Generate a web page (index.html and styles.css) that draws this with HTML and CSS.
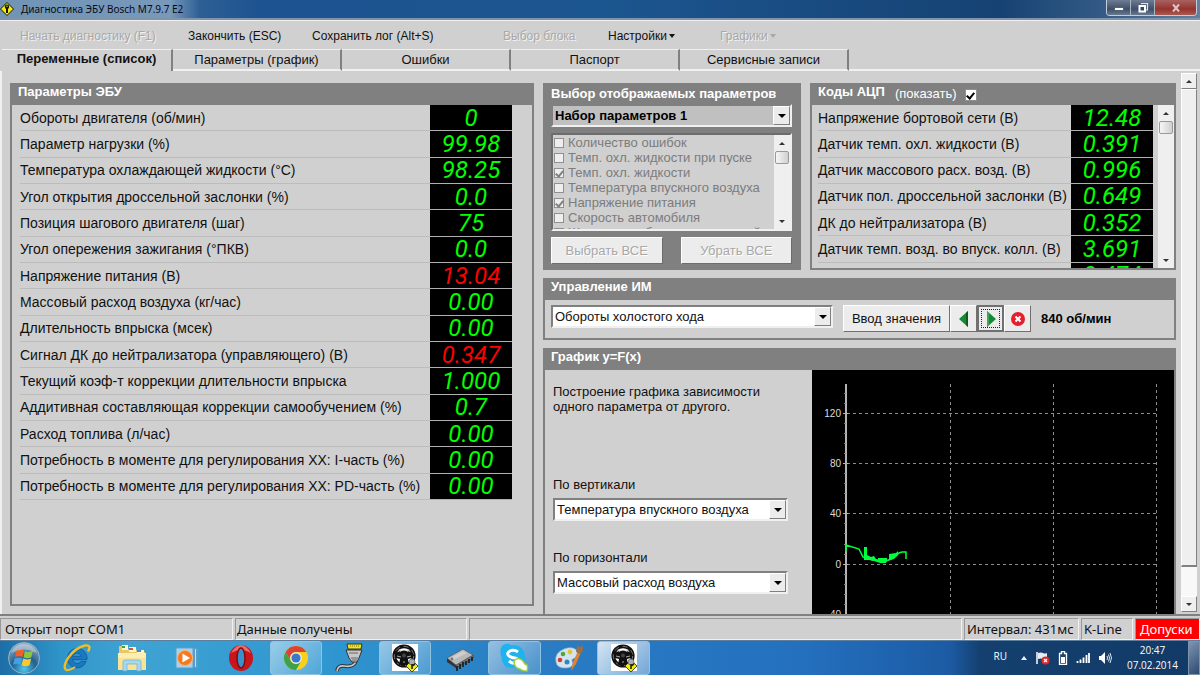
FILE: index.html
```html
<!DOCTYPE html>
<html lang="ru">
<head>
    <meta charset="UTF-8">
    <title>Диагностика ЭБУ Bosch M7.9.7 E2</title>
    <link rel="stylesheet" href="styles.css">
</head>
<body>
    <svg class="defs" aria-hidden="true">
        <symbol id="sign" viewBox="0 0 14 14">
            <path d="M7 0.5L13.5 7L7 13.5L0.5 7Z" fill="#f5ee00" stroke="#111" stroke-width="1"/>
            <circle cx="7" cy="4.8" r="2.2" fill="#111"/>
            <path d="M6 6h2v5h-2z" fill="#111"/>
            <circle cx="7" cy="4.3" r="0.7" fill="#f5ee00"/>
        </symbol>
        <symbol id="wheel" viewBox="0 0 28 28">
            <path d="M1 0h26v27H1z" fill="#fff"/>
            <circle cx="13" cy="12" r="9.7" fill="none" stroke="#111" stroke-width="3.8"/>
            <circle cx="13" cy="12" r="9.7" fill="none" stroke="#777" stroke-width="1" stroke-dasharray="5 4"/>
            <path d="M4 9Q13 4 22 9L21 14L17 15L18 21H8L9 15L5 14Z" fill="#111"/>
            <path d="M6 12l4 1M20 12l-4 1M12 18h2M10 8l-2-3M16 8l2-3" stroke="#aaa" stroke-width="1"/>
            <circle cx="13" cy="11.5" r="2" fill="#444"/>
            <path d="M21 16L27 22L21 28L15 22Z" fill="#f5ee00" stroke="#222" stroke-width="0.8"/>
            <circle cx="21" cy="18" r="3" fill="#aab0b0" stroke="#555" stroke-width="0.6"/>
            <path d="M21 20v5M21 22l3-2" stroke="#222" stroke-width="1.6"/>
        </symbol>
    </svg>

    <div class="window">
        <header class="titlebar">
            <svg class="app-icon" viewBox="0 0 14 14"><use href="#sign"/></svg>
            <span class="title">Диагностика ЭБУ Bosch M7.9.7 E2</span>
            <div class="caption">
                <button class="cap-btn" aria-label="Свернуть"><svg width="12" height="12" viewBox="0 0 12 12"><path d="M1.500 5.500h9v3h-9z" fill="#fff" stroke="#444f60" stroke-width="0.8"/></svg></button>
                <button class="cap-btn" aria-label="Развернуть"><svg width="12" height="12" viewBox="0 0 12 12"><path d="M4 1.500h6.500v6.500h-2" fill="none" stroke="#dde3ea" stroke-width="1.200"/><path d="M2.500 4h5.500v5.500h-5.500z" fill="#39465c" stroke="#fff" stroke-width="2"/></svg></button>
                <button class="cap-btn close" aria-label="Закрыть"><svg width="12" height="12" viewBox="0 0 12 12"><path d="M3 2.500l6 7M9 2.500l-6 7" stroke="#e0c4c4" stroke-width="2"/></svg></button>
            </div>
        </header>

        <nav class="menu">
            <button disabled>Начать диагностику (F1)</button>
            <button>Закончить (ESC)</button>
            <button>Сохранить лог (Alt+S)</button>
            <button disabled>Выбор блока</button>
            <button>Настройки<i class="arrow"></i></button>
            <button disabled>Графики<i class="arrow"></i></button>
        </nav>

        <div class="tabs">
            <button class="tab active">Переменные (список)</button>
            <button class="tab">Параметры (график)</button>
            <button class="tab">Ошибки</button>
            <button class="tab">Паспорт</button>
            <button class="tab">Сервисные записи</button>
        </div>

        <main class="page">
            <section class="panel ecu">
                <h2>Параметры ЭБУ</h2>
                <table class="values ecu-values">
                    <tr><th>Обороты двигателя (об/мин)</th><td>0</td></tr>
                    <tr><th>Параметр нагрузки (%)</th><td>99.98</td></tr>
                    <tr><th>Температура охлаждающей жидкости (°C)</th><td>98.25</td></tr>
                    <tr><th>Угол открытия дроссельной заслонки (%)</th><td>0.0</td></tr>
                    <tr><th>Позиция шагового двигателя (шаг)</th><td>75</td></tr>
                    <tr><th>Угол опережения зажигания (°ПКВ)</th><td>0.0</td></tr>
                    <tr><th>Напряжение питания (В)</th><td class="bad">13.04</td></tr>
                    <tr><th>Массовый расход воздуха (кг/час)</th><td>0.00</td></tr>
                    <tr><th>Длительность впрыска (мсек)</th><td>0.00</td></tr>
                    <tr><th>Сигнал ДК до нейтрализатора (управляющего) (В)</th><td class="bad">0.347</td></tr>
                    <tr><th>Текущий коэф-т коррекции длительности впрыска</th><td>1.000</td></tr>
                    <tr><th>Аддитивная составляющая коррекции самообучением (%)</th><td>0.7</td></tr>
                    <tr><th>Расход топлива (л/час)</th><td>0.00</td></tr>
                    <tr><th>Потребность в моменте для регулирования ХХ: I-часть (%)</th><td>0.00</td></tr>
                    <tr><th>Потребность в моменте для регулирования ХХ: PD-часть (%)</th><td>0.00</td></tr>
                </table>
            </section>

            <div class="side">
                <div class="top">
                    <section class="chooser">
                        <label for="preset">Выбор отображаемых параметров</label>
                        <span class="combo preset"><select id="preset"><option>Набор параметров 1</option></select></span>
                        <div class="listbox">
                            <div class="checks">
                                <label><input type="checkbox" disabled>Количество ошибок</label>
                                <label><input type="checkbox" disabled>Темп. охл. жидкости при пуске</label>
                                <label><input type="checkbox" disabled checked>Темп. охл. жидкости</label>
                                <label><input type="checkbox" disabled>Температура впускного воздуха</label>
                                <label><input type="checkbox" disabled checked>Напряжение питания</label>
                                <label><input type="checkbox" disabled>Скорость автомобиля</label>
                                <label><input type="checkbox" disabled>Желаемые обороты двигателей</label>
                            </div>
                            <div class="scroll small"><i class="up"></i><b></b><i class="down"></i></div>
                        </div>
                        <div class="actions">
                            <button disabled>Выбрать ВСЕ</button>
                            <button disabled>Убрать ВСЕ</button>
                        </div>
                    </section>

                    <section class="panel adc">
                        <h2>Коды АЦП <label for="show">(показать)</label><input type="checkbox" id="show" checked></h2>
                        <div class="adc-body">
                            <table class="values adc-values">
                                <tr><th>Напряжение бортовой сети (В)</th><td>12.48</td></tr>
                                <tr><th>Датчик темп. охл. жидкости (В)</th><td>0.391</td></tr>
                                <tr><th>Датчик массового расх. возд. (В)</th><td>0.996</td></tr>
                                <tr><th>Датчик пол. дроссельной заслонки (В)</th><td>0.649</td></tr>
                                <tr><th>ДК до нейтрализатора (В)</th><td>0.352</td></tr>
                                <tr><th>Датчик темп. возд. во впуск. колл. (В)</th><td>3.691</td></tr>
                                <tr><th></th><td>0.474</td></tr>
                            </table>
                            <div class="scroll small"><i class="up"></i><b></b><i class="down"></i></div>
                        </div>
                    </section>
                </div>

                <section class="panel control">
                    <h2>Управление ИМ</h2>
                    <div class="control-row">
                        <span class="combo actuator"><select aria-label="Управление ИМ"><option>Обороты холостого хода</option></select></span>
                        <div class="btns">
                            <button class="enter">Ввод значения</button>
                            <button class="step" aria-label="Меньше"><svg width="12" height="18" viewBox="0 0 12 18"><path d="M10 1v16L1 9Z" fill="#158a35"/><path d="M10 1v16L8 15V3Z" fill="#0a5c20"/></svg></button>
                            <button class="step focus" aria-label="Больше"><svg width="12" height="18" viewBox="0 0 12 18"><path d="M2 1v16L11 9Z" fill="#158a35"/><path d="M2 1v16L4 15V3Z" fill="#3aa855"/></svg></button>
                            <button class="step" aria-label="Стоп"><svg width="16" height="16" viewBox="0 0 16 16"><circle cx="8" cy="8" r="7" fill="#e3202c"/><path d="M5.500 5.500l5 5M10.500 5.500l-5 5" stroke="#fff" stroke-width="2"/></svg></button>
                        </div>
                        <strong>840 об/мин</strong>
                    </div>
                </section>

                <section class="panel graph">
                    <h2>График y=F(x)</h2>
                    <div class="graph-body">
                        <div class="axes">
                            <p>Построение графика зависимости одного параметра от другого.</p>
                            <label for="axis-y">По вертикали</label>
                            <span class="combo"><select id="axis-y"><option>Температура впускного воздуха</option></select></span>
                            <label for="axis-x">По горизонтали</label>
                            <span class="combo"><select id="axis-x"><option>Массовый расход воздуха</option></select></span>
                        </div>
                        <div class="plot">
                            <svg width="362" height="260" viewBox="0 0 362 260">
                                <g stroke="#8c8c8c" stroke-width="1" stroke-dasharray="3 3">
                                    <path d="M35 43.500h310M35 93.500h310M35 143.500h310M35 194.500h310"/>
                                    <path d="M138.500 14v246M241.500 14v246M344.500 14v246"/>
                                </g>
                                <path d="M34 14v246" stroke="#b4b4b4" stroke-width="2"/>
                                <path d="M31 43.500h5M31 93.500h5M31 143.500h5M31 194.500h5" stroke="#b4b4b4"/>
                                <path d="M32 23.500h2M32 33.500h2M32 53.500h2M32 63.500h2M32 73.500h2M32 83.500h2M32 103.500h2M32 113.500h2M32 123.500h2M32 133.500h2M32 153.500h2M32 163.500h2M32 174.500h2M32 184.500h2M32 204.500h2M32 214.500h2M32 224.500h2M32 234.500h2" stroke="#888"/>
                                <g class="ticks">
                                    <text x="29" y="47">120</text>
                                    <text x="29" y="97">80</text>
                                    <text x="29" y="147">40</text>
                                    <text x="29" y="198">0</text>
                                    <text x="29" y="248">-40</text>
                                </g>
                                <path d="M34 182v-7l13 4l4 8l3 1h4l2 2h5l3 1h6l5-2l5-3l3-3l3-1h4v7" fill="none" stroke="#00ff3c" stroke-width="1.500"/>
                                <path d="M52 177h3v8l4 2l3-1l2 3l2 1v-2h9v2h2v-6l7-1l2-2v4l-4 4l-7 2l-1 2h-6l-6-2l-5-1h-5Z" fill="#00ff3c"/>
                            </svg>
                        </div>
                    </div>
                </section>
            </div>

            <div class="scroll main-scroll"><i class="up"></i><b></b><i class="down"></i></div>
        </main>

        <footer class="status">
            <span class="cell port">Открыт порт COM1</span>
            <span class="cell data">Данные получены</span>
            <span class="cell fill"></span>
            <span class="cell interval">Интервал: 431мс</span>
            <span class="cell line">K-Line</span>
            <span class="cell alarm">Допуски</span>
        </footer>
    </div>

    <div class="taskbar">
        <button class="start" aria-label="Пуск">
            <svg width="34" height="34" viewBox="0 0 34 34">
                <defs><radialGradient id="orb" cx="50%" cy="85%" r="80%"><stop offset="0" stop-color="#4cc8ee"/><stop offset="0.500" stop-color="#235f8e"/><stop offset="1" stop-color="#8fa9bd"/></radialGradient></defs>
                <circle cx="17" cy="17" r="15.500" fill="url(#orb)" stroke="#8fb4cb"/>
                <path d="M9.500 9.500q4-2 7.500 0l-1.500 6.500q-3.500-1.500-7.500 0Z" fill="#f0602a"/>
                <path d="M18 10q4 2 8-0.500l-1.700 6.700q-4 2-7.800 0Z" fill="#8cc63c"/>
                <path d="M7.700 17.200q4-1.500 7.500 0l-1.500 6.600q-4-2-7.700 0Z" fill="#3fa2e8"/>
                <path d="M16.200 17.500q4 2 8 0l-1.700 6.700q-4 2-7.900 0Z" fill="#fcc92c"/>
                <path d="M4 12Q8 3 17 3T30 12Q17 5 4 12Z" fill="#fff" opacity="0.350"/>
            </svg>
        </button>
        <div class="apps">
            <button class="app" aria-label="Internet Explorer">
                <svg width="28" height="28" viewBox="0 0 28 28"><path d="M14 4.500a9.700 9.700 0 1 0 9.200 13h-5.200a4.600 4.600 0 0 1-8.400-1.800h14.400A9.700 9.700 0 0 0 14 4.500ZM9.600 12.300a4.600 4.600 0 0 1 8.700 0Z" fill="#1a78c2" fill-rule="evenodd" stroke="#0b4b8c" stroke-width="0.600"/><path d="M3 26C-2 22 8 5 22 1.500q7-1 3 6" fill="none" stroke="#f6bd20" stroke-width="2.400"/><path d="M3 26q4 1 9-3" fill="none" stroke="#f6bd20" stroke-width="2"/></svg>
            </button>
            <button class="app" aria-label="Проводник">
                <svg width="30" height="28" viewBox="0 0 30 28"><path d="M2 2h7l2 3h8l2 3h7v18H2Z" fill="#e8c866"/><path d="M5 1h6v5H5zM12 3h7v5h-7zM20 6h7v4h-7z" fill="#fff6cc"/><path d="M5 2h3v2H5z" fill="#4a9b45"/><path d="M12 4h4v2h-4z" fill="#d8553c"/><path d="M20 6h4v2h-4z" fill="#4688c9"/><path d="M1 9h28v17H1z" fill="#f8e394"/><path d="M1 9h28v5H1z" fill="#fbeeb4"/><path d="M6 27v-9q0-2 2-2h14q2 0 2 2v9h-4v-7H10v7Z" fill="#a5d8f0" stroke="#6aafd4" stroke-width="0.700"/></svg>
            </button>
            <button class="app" aria-label="Проигрыватель">
                <svg width="28" height="26" viewBox="0 0 28 26"><path d="M14 3h11v20H14z" fill="#5a9cc8"/><path d="M22 4h1v18h-1z" fill="#bfe0f2"/><path d="M3 3h17v20H3z" fill="#a8d2ec" stroke="#5d9fcb"/><circle cx="12" cy="13" r="7.500" fill="#f57a1f" stroke="#ffb26a"/><path d="M9.500 8.500v9l7.500-4.500Z" fill="#fff"/></svg>
            </button>
            <button class="app" aria-label="Opera">
                <svg width="26" height="28" viewBox="0 0 26 28"><ellipse cx="13" cy="14" rx="12" ry="13" fill="#c9151b"/><path d="M3 9Q8 1 13 1T23 9Q13 3 3 9Z" fill="#ef6b68"/><ellipse cx="13" cy="14" rx="4" ry="10" fill="#3a91c9" stroke="#820a10" stroke-width="1.500"/></svg>
            </button>
            <button class="app open" aria-label="Chrome">
                <svg width="26" height="26" viewBox="0 0 26 26"><circle cx="13" cy="13" r="12" fill="#f9cf1c"/><path d="M2.600 7A12 12 0 0 1 23.400 7H13a6 6 0 0 0-5.200 9Z" fill="#dd4132"/><path d="M2.600 7A12 12 0 0 0 13 25l5.200-9a6 6 0 0 1-10.400 0Z" fill="#3fa14a"/><circle cx="13" cy="13" r="5.800" fill="#eef3f8"/><circle cx="13" cy="13" r="4.600" fill="#3b79c8"/></svg>
            </button>
            <button class="app" aria-label="Порт">
                <svg width="30" height="30" viewBox="0 0 30 30"><path d="M2 28q1-6 7-5t9-1q2-1 3-4" fill="none" stroke="#333" stroke-width="3.600"/><path d="M2 28q1-6 7-5t9-1q2-1 3-4" fill="none" stroke="#ccc" stroke-width="1.600"/><path d="M11 7h16l-3 8l-2 4h-5l-3-4Z" fill="#c8c8c8" stroke="#333"/><path d="M16 15l7 0M17 17h5M14 10h9" stroke="#666"/><path d="M12 1h15l-1 5H13Z" fill="#f2e616" stroke="#333"/><path d="M15 3h10" stroke="#7d7600" stroke-dasharray="1 1"/></svg>
            </button>
            <button class="app open" aria-label="Диагностика"><svg width="28" height="28"><use href="#wheel"/></svg></button>
            <button class="app" aria-label="Микросхема">
                <svg width="30" height="26" viewBox="0 0 30 26"><path d="M2 13l9 7v3l-9-6Z" fill="#333"/><path d="M11 20l17-10v3L11 23Z" fill="#777" stroke="#333" stroke-width="0.600"/><path d="M12 21v5M15 19v5M18 17v5M21 16v4M24 14v4M27 12v4" stroke="#222" stroke-width="1.800"/><path d="M2 13L18 4l10 6L11 20Z" fill="#b9b9b9" stroke="#555" stroke-width="0.700"/><path d="M5 13L18 6l4 2L8 15Z" fill="#cfcfcf"/><circle cx="7" cy="14" r="1.400" fill="#777"/></svg>
            </button>
            <button class="app open" aria-label="Skype">
                <svg width="30" height="30" viewBox="0 0 30 30"><path d="M3 3q4-4 9-1q13-1 14 12q3 8-3 11q-4 2-8 0Q3 26 2.500 14Q0 7 3 3Z" fill="#1fb2ee"/><path d="M19 9q-4-3-8-1t-1 5q3 2 6 2t2 4q-3 3-8-1" fill="none" stroke="#fff" stroke-width="3"/><path d="M15 18q4-5 9 0l2 3q4 1 2 7q-5 0-7-2q-6-1-6-8Z" fill="#fff" stroke="#9bd13b" stroke-width="1.500"/></svg>
            </button>
            <button class="app" aria-label="Paint">
                <svg width="30" height="28" viewBox="0 0 30 28"><path d="M2 18Q0 9 10 5T25 9q1 4-4 5t-2 5q0 5-8 5t-9-6Z" fill="#d4e4ef" stroke="#8db0c8" stroke-width="0.700"/><circle cx="6" cy="16" r="2.300" fill="#d43c2c"/><circle cx="9" cy="10" r="2.300" fill="#56a636"/><circle cx="16" cy="8" r="2.400" fill="#e8c52e"/><circle cx="13" cy="18" r="2.500" fill="#3185c3"/><path d="M17 27l2-9l5-11l3 1l-5 12Z" fill="#e08232"/><path d="M22 8l1-6l3 1l2-2q2 4 0 7l-2 2Z" fill="#a06d40"/></svg>
            </button>
            <button class="app open current" aria-label="Диагностика ЭБУ"><svg width="28" height="28"><use href="#wheel"/></svg></button>
        </div>
        <div class="tray">
            <span class="lang">RU</span>
            <svg width="8" height="8" viewBox="0 0 8 8"><path d="M1 6l3-4l3 4Z" fill="#eef"/></svg>
            <svg width="14" height="14" viewBox="0 0 14 14"><path d="M1 1v12" stroke="#fff" stroke-width="1.500"/><path d="M2 2q3-1 5 0t4 0v6q-2 1-4 0t-5 0Z" fill="#e8edf2"/><circle cx="9.500" cy="9.500" r="4" fill="#dc2b2b"/><path d="M8 8l3 3M11 8l-3 3" stroke="#fff" stroke-width="1.200"/></svg>
            <svg width="10" height="14" viewBox="0 0 10 14"><path d="M3.500 0.500h3v2h2v11h-7v-11h2Z" fill="#233f62" stroke="#fff" stroke-width="1.300"/><path d="M3 6h4v6H3z" fill="#fff"/></svg>
            <svg width="14" height="12" viewBox="0 0 14 12"><path d="M1.500 9v2M4.500 7.500v3.500M7.500 5.500v5.500M10.500 3v8M13 1v10" stroke="#fff" stroke-width="1.800"/></svg>
            <svg width="14" height="14" viewBox="0 0 14 14"><path d="M1 5h2l4-4v12l-4-4H1Z" fill="#fff"/><path d="M9 5q1 2 0 4M10.500 3.500q2 3.500 0 7M12 2q3 5 0 10" fill="none" stroke="#dfe8f2"/></svg>
            <div class="clock">
                <time>20:47</time>
                <span>07.02.2014</span>
            </div>
            <button class="desktop" aria-label="Свернуть все окна"></button>
        </div>
    </div>
</body>
</html>
```
FILE: styles.css
```css
* {
    box-sizing: border-box;
}
body {
    margin: 0;
    height: 100vh;
    display: flex;
    flex-direction: column;
    overflow: hidden;
    font-family: "Liberation Sans", Arial, sans-serif;
    font-size: 14px;
    color: #111;
    background-color: #d0d0d0;
}
button, select, input {
    font: inherit;
    color: inherit;
    margin: 0;
}
button {
    padding: 0;
    border: none;
    background: none;
}
.defs {
    position: absolute;
    width: 0;
    height: 0;
}
.window {
    flex: 1;
    min-height: 0;
    display: flex;
    flex-direction: column;
}

/* title bar */
.titlebar {
    display: flex;
    align-items: center;
    height: 20px;
    flex-shrink: 0;
    border-bottom: 2px solid #7f93ad;
    background: linear-gradient(90deg, #7193b5 0, #7899ba 170px, #2d5f94 200px, #1c5390 260px, #1c5690 600px, #164273 1000px, #335a85 1100px, #64809e 100%);
}
.app-icon {
    width: 14px;
    height: 14px;
}
.title {
    flex: 1;
    padding-left: 7px;
    font-family: "Noto Sans", sans-serif;
    font-size: 10px;
    color: #0a0a14;
}
.caption {
    display: flex;
    align-self: flex-start;
    margin-right: 3px;
    border: 1px solid #c3ccd8;
    border-top: none;
    border-radius: 0 0 4px 4px;
    overflow: hidden;
}
.cap-btn {
    display: flex;
    align-items: center;
    justify-content: center;
    width: 24px;
    height: 15px;
    background: linear-gradient(#6f7c91, #3f4f69 60%, #67788f);
    border-right: 1px solid #a9b4c3;
}
.cap-btn.close {
    width: 41px;
    border-right: none;
    background: linear-gradient(#a7625f, #96332e 60%, #a95a50);
}

/* menu */
.menu {
    display: grid;
    grid-template-columns: 168px 124px 191px 105px 112px auto;
    padding: 7px 0 4px 20px;
    border-top: 1px solid #f0f0f0;
    flex-shrink: 0;
}
.menu button {
    text-align: left;
    font-size: 12px;
    line-height: 17px;
}
.menu button:disabled {
    color: #a8a8a8;
    text-shadow: 1px 1px 0 #f2f2f2;
}
.arrow {
    display: inline-block;
    margin-left: 2px;
    border: 3px solid transparent;
    border-top: 4px solid currentColor;
    border-bottom: none;
    vertical-align: 2px;
}

/* tabs */
.tabs {
    display: grid;
    grid-template-columns: 171px repeat(4, 169px) 1fr;
    padding-left: 2px;
    height: 22px;
    flex-shrink: 0;
}
.tabs::after {
    content: "";
    border-bottom: 2px solid #f0f0f0;
}
.tab {
    font-size: 13px;
    line-height: 16px;
    border-top: 1px solid #f0f0f0;
    border-right: 2px solid #808080;
    border-bottom: 2px solid #f0f0f0;
}
.tab.active {
    font-weight: bold;
    border-bottom: none;
    padding-bottom: 4px;
}

/* page */
.page {
    flex: 1;
    min-height: 0;
    display: grid;
    grid-template-columns: 524fr 637fr 16px;
    column-gap: 5px;
    padding: 0 3px 0 8px;
    border-left: 2px solid #f0f0f0;
    overflow: hidden;
}
.panel {
    border: 2px solid #808080;
    display: flex;
    flex-direction: column;
}
.panel h2 {
    margin: 0;
    padding-left: 6px;
    font-size: 13px;
    font-weight: bold;
    line-height: 14px;
    height: 20px;
    flex-shrink: 0;
    color: #fff;
    background-color: #808080;
}
.ecu {
    margin: 12px 0 8px;
}
.values {
    border-collapse: collapse;
    width: 100%;
}
.values th {
    padding: 0;
    font-weight: normal;
    text-align: left;
    white-space: nowrap;
    border-bottom: 1px solid #bcbcbc;
}
.values td {
    width: 82px;
    padding: 0;
    background-color: #000;
    border-bottom: 1px solid #b0b0b0;
    color: #00ff00;
    font-family: Roboto, sans-serif;
    font-style: italic;
    font-size: 24px;
    line-height: 24px;
    text-align: center;
}
.values td.bad {
    color: #ff0000;
}
.ecu-values {
    width: auto;
    height: 395px;
    margin: 0 20px 0 8px;
}
.side {
    display: flex;
    flex-direction: column;
    gap: 8px;
    min-height: 0;
    padding: 12px 0 0 4px;
}
.top {
    display: grid;
    grid-template-columns: 258fr 366fr;
    grid-template-rows: minmax(0, 1fr);
    gap: 9px;
    height: 187px;
    flex-shrink: 0;
}

/* combo boxes */
.combo {
    position: relative;
    display: block;
    height: 23px;
    border: 2px solid;
    border-color: #808080 #f0f0f0 #f0f0f0 #808080;
    background-color: #fff;
}
.combo select {
    display: block;
    width: 100%;
    height: 100%;
    padding: 0 20px 0 2px;
    border: none;
    outline: none;
    appearance: none;
    font-size: 13px;
    background: transparent;
}
.combo::before {
    content: "";
    position: absolute;
    top: 0;
    right: 0;
    bottom: 0;
    width: 15px;
    background-color: #ececec;
    border: 1px solid;
    border-color: #fff #808080 #808080 #fff;
    pointer-events: none;
}
.combo::after {
    content: "";
    position: absolute;
    top: 8px;
    right: 4px;
    border: 4px solid transparent;
    border-top-color: #000;
    border-bottom: none;
    pointer-events: none;
}

/* parameter chooser */
.chooser {
    display: flex;
    flex-direction: column;
    padding: 3px 9px 5px 8px;
    background-color: #808080;
}
.chooser > label {
    line-height: 16px;
    padding-bottom: 2px;
    font-weight: bold;
    font-size: 13px;
    color: #fff;
    white-space: nowrap;
}
.preset {
    background-color: #c0c0c0;
}
.preset select {
    font-weight: bold;
    color: #000;
}
.listbox {
    display: flex;
    height: 98px;
    margin: 6px 0;
    border: 2px solid;
    border-color: #6c6c6c #f0f0f0 #f0f0f0 #6c6c6c;
    background-color: #d0d0d0;
}
.checks {
    flex: 1;
    min-width: 0;
    overflow: hidden;
    padding-left: 1px;
}
.checks label {
    display: flex;
    align-items: center;
    gap: 4px;
    height: 15px;
    font-size: 13px;
    color: #7c7c7c;
    white-space: nowrap;
}
input[type="checkbox"] {
    appearance: none;
    display: inline-grid;
    place-items: center;
    width: 10px;
    height: 10px;
    flex-shrink: 0;
    border: 1px solid #909090;
    background-color: #eee;
}
input[type="checkbox"]:checked::before {
    content: "";
    width: 3px;
    height: 6px;
    border: solid #808080;
    border-width: 0 2px 2px 0;
    transform: rotate(40deg);
}
.actions {
    display: grid;
    grid-template-columns: 1fr 1fr;
    gap: 18px;
}
.actions button {
    height: 27px;
    font-size: 13px;
    background-color: #ececec;
    border: 1px solid;
    border-color: #fff #6c6c6c #6c6c6c #fff;
    color: #a8a8a8;
    text-shadow: 1px 1px 0 #fff;
}

/* scroll bars */
.scroll {
    display: flex;
    flex-direction: column;
    width: 16px;
    flex-shrink: 0;
    background-color: #efefef;
}
.scroll i {
    display: flex;
    align-items: center;
    justify-content: center;
    height: 16px;
}
.scroll .up::before,
.scroll .down::before {
    content: "";
    border: 3px solid transparent;
}
.scroll .up::before {
    border-top: none;
    border-bottom-color: #333;
}
.scroll .down::before {
    border-bottom: none;
    border-top-color: #333;
}
.scroll .down {
    margin-top: auto;
}
.scroll.small b {
    height: 13px;
    margin: 0 1px;
    border: 1px solid #999;
    border-radius: 2px;
    background: linear-gradient(90deg, #f6f6f6, #d0d0d4);
}
.main-scroll {
    margin: 2px 0;
    background-color: #f8f8f8;
}
.main-scroll i,
.main-scroll b {
    background-color: #efefef;
    border: 1px solid;
    border-color: #fff #808080 #808080 #fff;
}
.main-scroll b {
    flex: 1;
    margin-bottom: 29px;
    border-bottom-width: 2px;
}

/* ADC codes */
.adc h2 {
    display: flex;
}
.adc h2 label {
    margin-left: 10px;
    font-weight: normal;
    line-height: 18px;
}
.adc input[type="checkbox"] {
    width: 12px;
    height: 12px;
    margin: 4px 0 0 8px;
    background-color: #fff;
}
.adc input[type="checkbox"]:checked::before {
    border-color: #000;
}
.adc-body {
    flex: 1;
    min-height: 0;
    display: flex;
    align-items: flex-start;
    gap: 5px;
    padding-left: 6px;
    overflow: hidden;
}
.adc-values {
    flex: 1;
    height: 184px;
}
.adc-body .scroll {
    align-self: stretch;
}

/* actuator control */
.control {
    flex-shrink: 0;
}
.control-row {
    display: flex;
    align-items: center;
    gap: 10px;
    padding: 5px 6px 6px;
}
.actuator {
    width: 282px;
    margin-bottom: 4px;
}
.btns {
    display: flex;
}
.btns button {
    height: 27px;
    font-size: 13px;
    background-color: #ececec;
    border: 1px solid;
    border-color: #fff #707070 #707070 #fff;
}
.btns .enter {
    width: 107px;
}
.btns .step {
    display: flex;
    align-items: center;
    justify-content: center;
    width: 27px;
}
.btns .focus {
    border: 2px solid #707070;
    outline: 1px dotted #222;
    outline-offset: -5px;
}
.control strong {
    font-size: 13px;
    color: #000;
}

/* graph */
.graph {
    flex: 1;
    min-height: 0;
    overflow: hidden;
    border-bottom: none;
}
.graph-body {
    flex: 1;
    min-height: 0;
    display: flex;
}
.axes {
    flex: 1;
    padding: 14px 24px 0 8px;
    font-size: 13px;
}
.axes p {
    margin: 0 0 63px;
    line-height: 15px;
}
.axes label {
    display: block;
    line-height: 16px;
    padding-bottom: 5px;
}
.axes .combo {
    margin-bottom: 29px;
}
.plot {
    width: 362px;
    background-color: #000;
    overflow: hidden;
}
.plot svg {
    display: block;
}
.ticks text {
    font-size: 10px;
    fill: #ddd;
    text-anchor: end;
}

/* status bar */
.status {
    display: flex;
    gap: 2px;
    height: 26px;
    flex-shrink: 0;
    padding-top: 2px;
    border-top: 2px solid #808080;
    font-family: "Noto Sans", sans-serif;
    font-size: 13px;
    line-height: 20px;
}
.cell {
    border: 1px solid;
    border-color: #989898 #f0f0f0 #f0f0f0 #989898;
    padding-left: 4px;
    white-space: nowrap;
}
.cell.port {
    width: 233px;
}
.cell.data {
    width: 232px;
    padding-left: 1px;
}
.cell.fill {
    flex: 1;
}
.cell.interval {
    width: 115px;
    padding-left: 2px;
}
.cell.line {
    width: 52px;
    padding-left: 2px;
}
.cell.alarm {
    width: 65px;
    color: #fff;
    background-color: #ff0000;
}

/* taskbar */
.taskbar {
    display: flex;
    height: 35px;
    flex-shrink: 0;
    border-top: 1px solid #5c7f9f;
    background: linear-gradient(90deg, #1c6ea6 0, #2f94c8 60px, #3fa3d3 130px, #2f96d0 330px, #2a7fc4 500px, #2470bf 800px, #1c5ba4 950px, #14406f 980px, #123a66 100%);
}
.start {
    display: flex;
    align-items: center;
    justify-content: center;
    width: 48px;
}
.apps {
    display: grid;
    grid-template-columns: repeat(11, 1fr);
    gap: 2px;
    width: 599px;
    margin-left: 3px;
}
.app {
    display: flex;
    align-items: center;
    justify-content: center;
    height: 34px;
}
.app.open {
    border: 1px solid #8fc3e2;
    border-radius: 3px;
    background: linear-gradient(135deg, rgba(255, 255, 255, 0.5), rgba(255, 255, 255, 0.15));
}
.app.current {
    background: linear-gradient(135deg, rgba(255, 255, 255, 0.8), rgba(255, 255, 255, 0.35));
}
.tray {
    flex: 1;
    display: flex;
    align-items: center;
    justify-content: flex-end;
    gap: 8px;
    font-family: "Open Sans", sans-serif;
    font-size: 10px;
    color: #fff;
}
.lang {
    margin: 0 5px 4px 0;
}
.clock {
    display: flex;
    flex-direction: column;
    align-items: center;
    margin-left: 7px;
    line-height: 15px;
}
.desktop {
    align-self: stretch;
    width: 12px;
    margin-left: 2px;
    border: 1px solid #7d93ad;
    background: linear-gradient(135deg, #7f95b0, #2b4a70);
}
```
